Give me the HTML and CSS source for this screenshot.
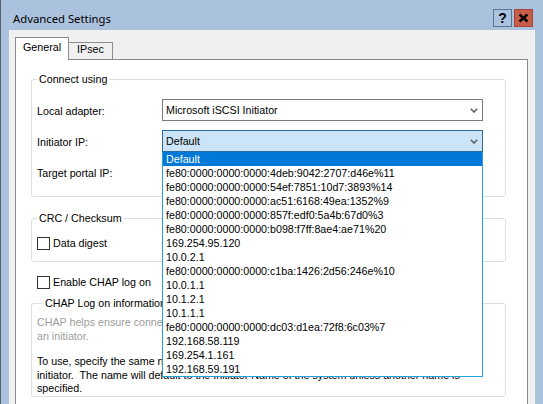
FILE: index.html
```html
<!DOCTYPE html>
<html lang="en">
<head>
  <meta charset="UTF-8" />
  <meta name="viewport" content="width=device-width, initial-scale=1.0" />
  <title>Advanced Settings</title>
  <link rel="stylesheet" href="styles.css">
</head>
<body>
  <div class="window">
    <div class="titlebar">
      <span class="title">Advanced Settings</span>
      <div class="caption-buttons">
        <div class="cap-btn help">?</div>
        <div class="cap-btn close">
          <svg width="17" height="16" viewBox="0 0 17 16">
            <path d="M4.5 4.5 L12.5 11.5 M12.5 4.5 L4.5 11.5" stroke="#000" stroke-width="2.4" fill="none" />
          </svg>
        </div>
      </div>
    </div>

    <div class="client">
      <div class="tabs">
        <div class="tab active">General</div>
        <div class="tab">IPsec</div>
      </div>

      <div class="panel">
        <fieldset class="group">
          <legend>Connect using</legend>
          <div class="form-grid">
            <label>Local adapter:</label>
            <div class="combo">
              <span>Microsoft iSCSI Initiator</span>
              <svg class="chevron" width="8" height="5" viewBox="0 0 8 5"><path d="M0.8 0.8 L4 4 L7.2 0.8" /></svg>
            </div>

            <label>Initiator IP:</label>
            <div class="combo-wrap">
              <div class="combo open">
                <span>Default</span>
                <svg class="chevron" width="8" height="5" viewBox="0 0 8 5"><path d="M0.8 0.8 L4 4 L7.2 0.8" /></svg>
              </div>
              <ul class="dropdown">
                <li class="selected">Default</li>
                <li>fe80:0000:0000:0000:4deb:9042:2707:d46e%11</li>
                <li>fe80:0000:0000:0000:54ef:7851:10d7:3893%14</li>
                <li>fe80:0000:0000:0000:ac51:6168:49ea:1352%9</li>
                <li>fe80:0000:0000:0000:857f:edf0:5a4b:67d0%3</li>
                <li>fe80:0000:0000:0000:b098:f7ff:8ae4:ae71%20</li>
                <li>169.254.95.120</li>
                <li>10.0.2.1</li>
                <li>fe80:0000:0000:0000:c1ba:1426:2d56:246e%10</li>
                <li>10.0.1.1</li>
                <li>10.1.2.1</li>
                <li>10.1.1.1</li>
                <li>fe80:0000:0000:0000:dc03:d1ea:72f8:6c03%7</li>
                <li>192.168.58.119</li>
                <li>169.254.1.161</li>
                <li>192.168.59.191</li>
              </ul>
            </div>

            <label>Target portal IP:</label>
            <div class="combo">
              <span></span>
              <svg class="chevron" width="8" height="5" viewBox="0 0 8 5"><path d="M0.8 0.8 L4 4 L7.2 0.8" /></svg>
            </div>
          </div>
        </fieldset>

        <fieldset class="group crc">
          <legend>CRC / Checksum</legend>
          <div class="check-row">
            <span class="checkbox"></span>
            <span>Data digest</span>
          </div>
        </fieldset>

        <div class="check-row chap-toggle">
          <span class="checkbox"></span>
          <span>Enable CHAP log on</span>
        </div>

        <fieldset class="group chap">
          <legend>CHAP Log on information</legend>
          <p class="muted">CHAP helps ensure connection security by providing authentication between a target and<br>an initiator.</p>
          <p>To use, specify the same name and CHAP secret that was configured on the target for this<br>initiator.&nbsp; The name will default to the Initiator Name of the system unless another name is<br>specified.</p>
        </fieldset>
      </div>
    </div>
  </div>
</body>
</html>
```

FILE: styles.css
```css
html, body {
  margin: 0;
  height: 100%;
}

body {
  font-family: 'Liberation Sans', Arial, sans-serif;
  font-size: 10.7px;
  color: #000;
  background: #aac2dd;
  overflow: hidden;
}

.window {
  height: 404px;
  border-left: 1px solid #5c6470;
  padding: 0 8px;
  display: flex;
  flex-direction: column;
}

.titlebar {
  height: 30px;
  display: flex;
  justify-content: space-between;
  align-items: flex-start;
  flex-shrink: 0;
}

.title {
  font-family: 'Noto Sans', sans-serif;
  font-size: 11.3px;
  line-height: 16px;
  margin: 11px 0 0 4px;
}

.caption-buttons {
  display: flex;
  gap: 2px;
  margin: 9px 2px 0 0;
}

.cap-btn {
  width: 17px;
  height: 16px;
  border: 1px solid #5b7591;
  display: flex;
  align-items: center;
  justify-content: center;
}

.help {
  font-weight: bold;
  font-size: 14px;
  line-height: 16px;
}

.close {
  background: #c95d4a;
  border-color: #a2473a;
}

.client {
  flex: 1;
  background: #f0f0f0;
  padding: 7px 7px 0 6px;
  display: flex;
  flex-direction: column;
}

.tabs {
  display: flex;
  align-items: flex-end;
}

.tab {
  border: 1px solid #8d8d8d;
  border-bottom: none;
  background: #f0f0f0;
  padding: 0 8px 4px;
  line-height: 13px;
}

.tab.active {
  position: relative;
  z-index: 1;
  background: #fff;
  padding: 2px 7px 6px;
  line-height: 14px;
}

.tab + .tab {
  border-left: none;
}

.panel {
  flex: 1;
  margin-top: -1px;
  background: #fff;
  border: 1px solid #8a8a8a;
  border-bottom: none;
  padding: 12px 21px 0 15px;
}

.group {
  margin: 0;
  padding: 13px 5px 13px 5px;
  border: 1px solid #dcdfe3;
  border-radius: 3px;
  min-width: 0;
}

.group legend {
  padding: 0 2px;
  line-height: 14px;
}

.form-grid {
  display: grid;
  grid-template-columns: 125px 321px;
  grid-auto-rows: 22px;
  row-gap: 9px;
  align-items: center;
}

.form-grid label {
  padding-top: 2px;
}

.combo {
  height: 22px;
  box-sizing: border-box;
  border: 1px solid #7a7a7a;
  background: #fff;
  padding: 0 4px 0 3px;
  display: flex;
  align-items: center;
  justify-content: space-between;
}

.combo.open {
  background: #cce4f7;
  border-color: #2c6a9c;
}

.chevron path {
  fill: none;
  stroke: #5f5f5f;
  stroke-width: 1.6;
}

.combo-wrap {
  position: relative;
  z-index: 2;
}

.dropdown {
  position: absolute;
  top: 100%;
  left: 0;
  width: 321px;
  box-sizing: border-box;
  margin: 0;
  padding: 0;
  list-style: none;
  background: #fff;
  border: 1px solid #26a0da;
  border-top: none;
}

.dropdown li {
  height: 14px;
  line-height: 14px;
  padding-left: 3px;
  white-space: nowrap;
}

.dropdown li.selected {
  background: #0078d7;
  color: #fff;
}

.crc {
  margin-top: 14px;
  padding: 12px 5px 11px;
}

.check-row {
  display: flex;
  align-items: center;
  gap: 3px;
  line-height: 13px;
}

.checkbox {
  width: 11px;
  height: 11px;
  border: 1px solid #333;
  background: #fff;
}

.chap-toggle {
  margin: 14px 0 0 6px;
}

.chap {
  margin-top: 7px;
  padding: 6px 5px 0;
}

.chap legend {
  margin-left: 6px;
}

.chap p {
  margin: 0;
  line-height: 13.5px;
  white-space: nowrap;
}

.chap p + p {
  margin-top: 12px;
}

.muted {
  color: #9d9d9d;
}
```
